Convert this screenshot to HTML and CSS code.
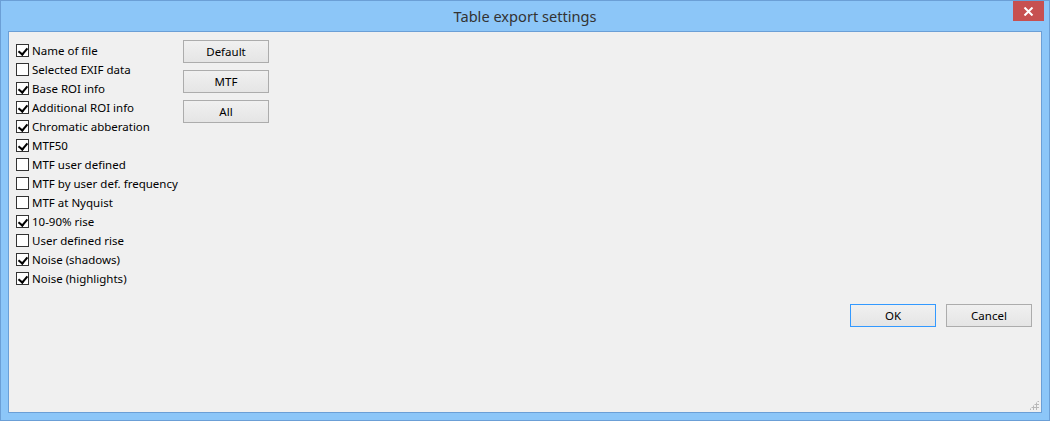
FILE: index.html
```html
<!DOCTYPE html>
<html lang="en">
<head>
    <meta charset="UTF-8">
    <title>Table export settings</title>
    <link rel="stylesheet" href="styles.css">
</head>
<body>
    <div class="window">
        <div class="titlebar">
            <span class="title">Table export settings</span>
            <div class="close-btn">
                <svg width="11" height="9" viewBox="0 0 11 9">
                    <path d="M1.5 0.5 L9.5 8.5 M9.5 0.5 L1.5 8.5" stroke="#fff" stroke-width="2"/>
                </svg>
            </div>
        </div>
        <div class="client">
            <div class="top-row">
                <div class="options">
                    <label class="option"><span class="box checked"></span>Name of file</label>
                    <label class="option"><span class="box"></span>Selected EXIF data</label>
                    <label class="option"><span class="box checked"></span>Base ROI info</label>
                    <label class="option"><span class="box checked"></span>Additional ROI info</label>
                    <label class="option"><span class="box checked"></span>Chromatic abberation</label>
                    <label class="option"><span class="box checked"></span>MTF50</label>
                    <label class="option"><span class="box"></span>MTF user defined</label>
                    <label class="option"><span class="box"></span>MTF by user def. frequency</label>
                    <label class="option"><span class="box"></span>MTF at Nyquist</label>
                    <label class="option"><span class="box checked"></span>10-90% rise</label>
                    <label class="option"><span class="box"></span>User defined rise</label>
                    <label class="option"><span class="box checked"></span>Noise (shadows)</label>
                    <label class="option"><span class="box checked"></span>Noise (highlights)</label>
                </div>
                <div class="presets">
                    <button class="btn">Default</button>
                    <button class="btn">MTF</button>
                    <button class="btn">All</button>
                </div>
            </div>
            <div class="actions">
                <button class="btn focused">OK</button>
                <button class="btn">Cancel</button>
            </div>
            <div class="grip"></div>
        </div>
    </div>
</body>
</html>
```

FILE: styles.css
```css
:root {
    --frame-color: #8cc6f8;
    --frame-edge: #6b9fd6;
    --face-color: #f0f0f0;
    --text-color: #000;
    --close-color: #c75050;
}

* {
    margin: 0;
    padding: 0;
    box-sizing: border-box;
}

body {
    font-family: 'Noto Sans', 'Open Sans', sans-serif;
    font-size: 11.5px;
    color: var(--text-color);
    background-color: var(--frame-color);
}

.window {
    width: 1050px;
    height: 421px;
    background-color: var(--frame-color);
    border: 1px solid var(--frame-edge);
    display: flex;
    flex-direction: column;
    padding: 0 7px 7px 7px;
}

.titlebar {
    height: 30px;
    flex-shrink: 0;
    position: relative;
    display: flex;
    align-items: center;
    justify-content: center;
}

.title {
    font-size: 14.6px;
    color: #333;
    margin-top: -1px;
}

.close-btn {
    position: absolute;
    top: 0;
    right: -2px;
    width: 31px;
    height: 20px;
    background-color: var(--close-color);
    display: flex;
    align-items: center;
    justify-content: center;
}

.client {
    flex: 1;
    background-color: var(--face-color);
    border: 1px solid var(--frame-edge);
    position: relative;
    padding: 9px 0 0 7px;
}

.top-row {
    display: flex;
}

.options {
    width: 167px;
    display: flex;
    flex-direction: column;
}

.option {
    display: flex;
    align-items: center;
    height: 19px;
    white-space: nowrap;
}

.box {
    width: 13px;
    height: 13px;
    flex-shrink: 0;
    border: 1px solid #333;
    background-color: #fff;
    margin-right: 3px;
    position: relative;
}

.box.checked::after {
    content: '';
    position: absolute;
    left: 3px;
    top: 1px;
    width: 4px;
    height: 7px;
    border-right: 2px solid #000;
    border-bottom: 2px solid #000;
    transform: rotate(40deg);
}

.presets {
    display: flex;
    flex-direction: column;
    gap: 7px;
    margin-top: -1px;
}

.btn {
    width: 86px;
    height: 23px;
    font-family: inherit;
    font-size: 11.5px;
    color: var(--text-color);
    background: linear-gradient(#f0f0f0, #e5e5e5);
    border: 1px solid #acacac;
}

.btn.focused {
    border-color: #3399ff;
}

.actions {
    display: flex;
    justify-content: flex-end;
    gap: 10px;
    margin-top: 16px;
    padding-right: 9px;
}

.grip {
    position: absolute;
    right: 2px;
    bottom: 2px;
    width: 10px;
    height: 10px;
    background-image: radial-gradient(circle, #b8b8b8 1px, transparent 1.2px);
    background-size: 3px 3px;
    clip-path: polygon(100% 0, 100% 100%, 0 100%);
}
```
